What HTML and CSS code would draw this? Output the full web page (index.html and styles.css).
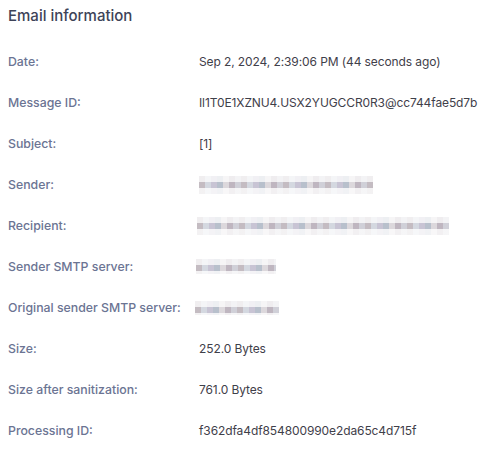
FILE: index.html
```html
<!DOCTYPE html>
<html>
<head>
<meta charset="utf-8">
<link rel="stylesheet" href="styles.css">
</head>
<body>
<section class="panel">
  <h2 class="title">Email information</h2>
  <dl class="info">
    <div class="row"><dt>Date:</dt><dd>Sep 2, 2024, 2:39:06 PM (44 seconds ago)</dd></div>
    <div class="row"><dt>Message ID:</dt><dd>Il1T0E1XZNU4.USX2YUGCCR0R3@cc744fae5d7b</dd></div>
    <div class="row"><dt>Subject:</dt><dd>[1]</dd></div>
    <div class="row"><dt>Sender:</dt><dd><span class="blur b-sender"></span></dd></div>
    <div class="row"><dt>Recipient:</dt><dd><span class="blur b-recipient"></span></dd></div>
    <div class="row"><dt>Sender SMTP server:</dt><dd><span class="blur b-smtp"></span></dd></div>
    <div class="row"><dt>Original sender SMTP server:</dt><dd><span class="blur b-orig"></span></dd></div>
    <div class="row"><dt>Size:</dt><dd>252.0 Bytes</dd></div>
    <div class="row"><dt>Size after sanitization:</dt><dd>761.0 Bytes</dd></div>
    <div class="row"><dt>Processing ID:</dt><dd>f362dfa4df854800990e2da65c4d715f</dd></div>
  </dl>
</section>
</body>
</html>
```
FILE: styles.css
```css
* { box-sizing: border-box; }
body {
  margin: 0;
  background: #fff;
  font-family: Inter, "Noto Sans", sans-serif;
}
.panel {
  padding: 5px 8px 0 8px;
}
.title {
  margin: 0;
  font-size: 15px;
  font-weight: 500;
  color: #3d4358;
  line-height: 22px;
}
.info {
  margin: 0;
  padding-top: 14px;
}
.row {
  display: flex;
  align-items: center;
  height: 41px;
}
dt {
  width: 191px;
  flex: none;
  font-size: 12.3px;
  font-weight: 500;
  color: #6b7493;
}
dd {
  margin: 0;
  font-size: 12px;
  letter-spacing: -0.1px;
  color: #3f404a;
  display: flex;
  align-items: center;
  white-space: nowrap;
}
.blur {
  display: block;
  height: 18px;
  background:
    linear-gradient(to bottom, rgba(255,255,255,0.75) 0 6px, rgba(255,255,255,0) 6px 12px, rgba(255,255,255,0.8) 12px),
    repeating-linear-gradient(90deg, #c4bcc2 0 6px, #d4d8e0 6px 12px, #c8c4d4 12px 18px, #b8c0cc 18px 24px, #dcd8dc 24px 30px, #bfb6c0 30px 36px, #d0d0d8 36px 42px);
}
.b-sender { width: 174px; }
.b-recipient { width: 252px; margin-left: -2px; }
.b-smtp { width: 80px; height: 15px; margin-left: -3px; }
.b-orig { width: 84px; height: 14px; margin-left: -4px; }
```
